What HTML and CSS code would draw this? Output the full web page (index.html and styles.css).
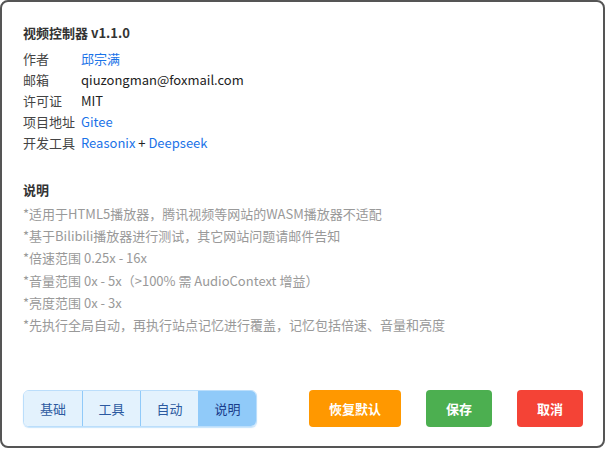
FILE: index.html
```html
<!DOCTYPE html>
<html lang="zh-CN">

<head>
    <meta charset="UTF-8">
    <meta name="viewport" content="width=device-width, initial-scale=1.0">
    <title>视频控制器</title>
    <link rel="stylesheet" href="styles.css">
</head>

<body>
    <div class="panel">
        <div class="title">视频控制器 v1.1.0</div>
        <div class="info_row"><span class="info_label">作者</span><a href="javascript:;" class="link">邱宗满</a></div>
        <div class="info_row"><span class="info_label">邮箱</span><span>qiuzongman@foxmail.com</span></div>
        <div class="info_row"><span class="info_label">许可证</span><span>MIT</span></div>
        <div class="info_row"><span class="info_label">项目地址</span><a href="javascript:;" class="link">Gitee</a></div>
        <div class="info_row"><span class="info_label">开发工具</span><span><a href="javascript:;" class="link">Reasonix</a> + <a href="javascript:;" class="link">Deepseek</a></span></div>

        <div class="notes_title">说明</div>
        <ul class="notes">
            <li>*适用于HTML5播放器，腾讯视频等网站的WASM播放器不适配</li>
            <li>*基于Bilibili播放器进行测试，其它网站问题请邮件告知</li>
            <li>*倍速范围 0.25x - 16x</li>
            <li>*音量范围 0x - 5x（>100% 需 AudioContext 增益）</li>
            <li>*亮度范围 0x - 3x</li>
            <li>*先执行全局自动，再执行站点记忆进行覆盖，记忆包括倍速、音量和亮度</li>
        </ul>

        <div class="footer">
            <div class="tabs">
                <button class="tab">基础</button>
                <button class="tab">工具</button>
                <button class="tab">自动</button>
                <button class="tab active">说明</button>
            </div>
            <div class="actions">
                <button class="btn btn_reset">恢复默认</button>
                <button class="btn btn_save">保存</button>
                <button class="btn btn_cancel">取消</button>
            </div>
        </div>
    </div>
</body>

</html>
```

FILE: styles.css
```css
* {
    margin: 0;
    padding: 0;
    box-sizing: border-box;
}

body {
    font-family: "Noto Sans CJK SC", "Noto Sans", sans-serif;
    font-size: 13px;
    color: #222;
    background-color: #fff;
}

.panel {
    display: flex;
    flex-direction: column;
    width: 605px;
    height: 448px;
    padding: 20px 20px 19px 21px;
    border: 2px solid #555;
    border-radius: 8px;
    background-color: #fff;
}

.title {
    font-weight: bold;
    color: #333;
    line-height: 21px;
    margin-bottom: 5px;
}

.info_row {
    display: flex;
    line-height: 21px;
}

.info_label {
    width: 58px;
    color: #444;
}

.link {
    color: #1a73e8;
    text-decoration: none;
}

.notes_title {
    margin-top: 26px;
    font-weight: bold;
    color: #333;
    line-height: 21px;
    margin-bottom: 3px;
}

.notes {
    list-style: none;
    color: #999;
    line-height: 22.2px;
}

.footer {
    display: flex;
    justify-content: space-between;
    margin-top: auto;
}

.tabs {
    display: flex;
    border: 1px solid #bbdefb;
    border-radius: 6px;
    overflow: hidden;
    box-shadow: 0 1px 1px rgba(144, 202, 249, 0.5);
}

.tab {
    width: 58px;
    height: 35px;
    font-family: inherit;
    font-size: 13px;
    color: #2c5aa0;
    background-color: #e3f2fd;
    border: none;
    border-left: 1px solid #90caf9;
}

.tab:first-child {
    border-left: none;
}

.tab.active {
    background-color: #90caf9;
    color: #1a3c8a;
}

.actions {
    display: flex;
    gap: 25px;
}

.btn {
    height: 37px;
    padding: 0 20px;
    font-family: inherit;
    font-size: 13px;
    font-weight: bold;
    color: #fff;
    border: none;
    border-radius: 4px;
}

.btn_reset {
    background-color: #ff9800;
}

.btn_save {
    background-color: #4caf50;
}

.btn_cancel {
    background-color: #f44336;
}
```
